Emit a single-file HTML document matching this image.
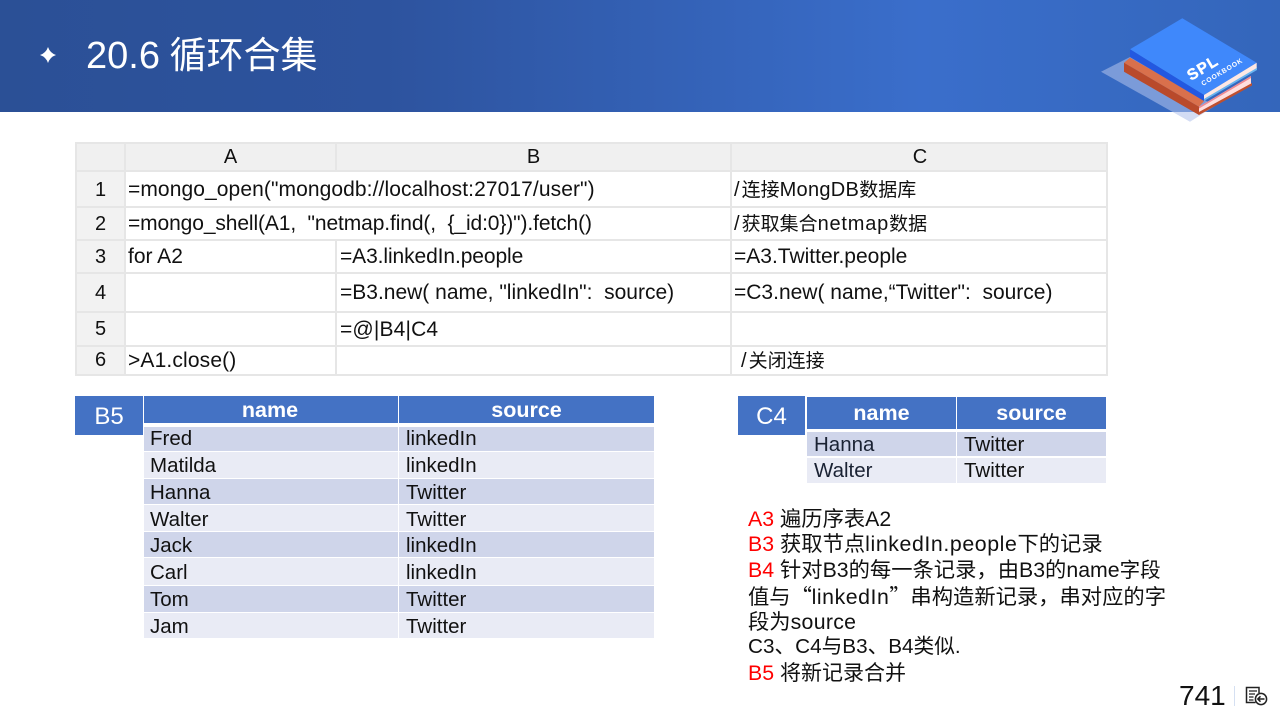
<!DOCTYPE html>
<html lang="zh-CN"><head><meta charset="utf-8">
<style>
html,body{margin:0;padding:0}
body{width:1280px;height:720px;position:relative;overflow:hidden;background:#fff;font-family:"Liberation Sans","Noto Sans CJK SC",sans-serif;color:#111}
.a{position:absolute;white-space:pre;line-height:1}
.t{font-size:21px;height:24px;line-height:24px}
.d{font-size:20.5px;height:24px;line-height:24px}
.n{font-size:20px;height:24px;line-height:24px}
.c{text-align:center}
.r{position:absolute}
.red{color:#f00}
.h{font-weight:bold;color:#fff;font-size:21.5px;text-align:center}
.z{font-size:19px}
.s{font-size:21.3px;height:24px;line-height:24px}
.l{letter-spacing:.55px}
.q{display:inline-block;width:21px;font-family:"Noto Sans CJK SC",sans-serif}
</style></head><body>
<div class="r" style="left:0;top:0;width:1280px;height:112px;background:linear-gradient(90deg,#2b5096 0%,#2d539e 30%,#3a6ecb 72%,#3466bb 100%)"></div>
<svg class="r" style="left:36px;top:43px" width="24" height="24" viewBox="0 0 24 24"><path d="M12 4 Q14 10 20 12 Q14 14 12 20 Q10 14 4 12 Q10 10 12 4Z" fill="#fff"/></svg>
<div class="a" style="left:86px;top:34px;font-size:38px;line-height:44px;color:#fff">20.6 <span style="font-size:37px;margin-left:-1px">循环合集</span></div>

<svg class="r" style="left:0;top:0" width="1280" height="130" viewBox="0 0 1280 130">
<defs><clipPath id="up"><rect x="0" y="0" width="1280" height="112"/></clipPath><clipPath id="dn"><rect x="0" y="112" width="1280" height="20"/></clipPath></defs>
<polygon points="1101,71.7 1130,57 1215,106 1190,121.7" fill="#7b9bd9" clip-path="url(#up)"/>
<polygon points="1101,71.7 1130,57 1215,106 1190,121.7" fill="#d3dcf4" clip-path="url(#dn)"/>
<polygon points="1124,62.7 1130,57.7 1205,100 1199,106.7" fill="#d9704c"/>
<polygon points="1124,62.7 1199,106.7 1199,115 1124,71.7" fill="#b94a2b"/>
<polygon points="1199,106.7 1251,76 1251,84 1199,112" fill="#ffdede"/>
<polygon points="1199,106.7 1251,76 1251,78 1199,108.5" fill="#ee8a92"/>
<polygon points="1199,112 1252,83 1252,85.5 1199,115" fill="#c0502f"/>
<polygon points="1204,99 1257,67.5 1257,70 1204,101" fill="#68b4f0"/>
<polygon points="1130,49.3 1182.3,18.3 1256.7,62.7 1204,95" fill="#3f88fb"/>
<polygon points="1130,49.3 1204,95 1204,101 1130,57" fill="#2358e0"/>
<polygon points="1204,95 1256.7,62.7 1256.7,68 1204,99" fill="#fde8e4"/>
<text transform="translate(1191,81) rotate(-31)" font-family="Liberation Sans" font-weight="bold" font-size="15.5" fill="#fff" stroke="#fff" stroke-width=".4" letter-spacing="1.2">SPL</text>
<text transform="translate(1203,86) rotate(-31)" font-family="Liberation Sans" font-weight="bold" font-size="6.8" fill="#fff" letter-spacing=".8">COOKBOOK</text>
</svg>

<!-- grid -->
<div class="r" style="left:75px;top:142px;width:1033px;height:234px;background:#e6e6e6"></div>
<div class="r" style="left:77px;top:144px;width:47px;height:26px;background:#f0f0f0"></div>
<div class="r" style="left:126px;top:144px;width:209px;height:26px;background:#f0f0f0"></div>
<div class="r" style="left:337px;top:144px;width:393px;height:26px;background:#f0f0f0"></div>
<div class="r" style="left:732px;top:144px;width:374px;height:26px;background:#f0f0f0"></div>
<div class="r" style="left:77px;top:172px;width:47px;height:34px;background:#f2f2f2"></div>
<div class="r" style="left:77px;top:208px;width:47px;height:31px;background:#f2f2f2"></div>
<div class="r" style="left:77px;top:241px;width:47px;height:31px;background:#f2f2f2"></div>
<div class="r" style="left:77px;top:274px;width:47px;height:37px;background:#f2f2f2"></div>
<div class="r" style="left:77px;top:313px;width:47px;height:32px;background:#f2f2f2"></div>
<div class="r" style="left:77px;top:347px;width:47px;height:27px;background:#f2f2f2"></div>
<div class="r" style="left:126px;top:172px;width:604px;height:34px;background:#fff"></div>
<div class="r" style="left:732px;top:172px;width:374px;height:34px;background:#fff"></div>
<div class="r" style="left:126px;top:208px;width:604px;height:31px;background:#fff"></div>
<div class="r" style="left:732px;top:208px;width:374px;height:31px;background:#fff"></div>
<div class="r" style="left:126px;top:241px;width:209px;height:31px;background:#fff"></div>
<div class="r" style="left:337px;top:241px;width:393px;height:31px;background:#fff"></div>
<div class="r" style="left:732px;top:241px;width:374px;height:31px;background:#fff"></div>
<div class="r" style="left:126px;top:274px;width:209px;height:37px;background:#fff"></div>
<div class="r" style="left:337px;top:274px;width:393px;height:37px;background:#fff"></div>
<div class="r" style="left:732px;top:274px;width:374px;height:37px;background:#fff"></div>
<div class="r" style="left:126px;top:313px;width:209px;height:32px;background:#fff"></div>
<div class="r" style="left:337px;top:313px;width:393px;height:32px;background:#fff"></div>
<div class="r" style="left:732px;top:313px;width:374px;height:32px;background:#fff"></div>
<div class="r" style="left:126px;top:347px;width:209px;height:27px;background:#fff"></div>
<div class="r" style="left:337px;top:347px;width:393px;height:27px;background:#fff"></div>
<div class="r" style="left:732px;top:347px;width:374px;height:27px;background:#fff"></div>

<div class="a n c" style="left:126px;top:145px;width:209px">A</div>
<div class="a n c" style="left:337px;top:145px;width:393px">B</div>
<div class="a n c" style="left:733px;top:145px;width:374px">C</div>
<div class="a n c" style="left:77px;top:178px;width:47px">1</div>
<div class="a n c" style="left:77px;top:212px;width:47px">2</div>
<div class="a n c" style="left:77px;top:245px;width:47px">3</div>
<div class="a n c" style="left:77px;top:281px;width:47px">4</div>
<div class="a n c" style="left:77px;top:317px;width:47px">5</div>
<div class="a n c" style="left:77px;top:348px;width:47px">6</div>

<div class="a t" style="left:128px;top:178px;letter-spacing:.09px">=mongo_open("mongodb://localhost:27017/user")</div>
<div class="a t" style="left:128px;top:212px;letter-spacing:-.11px">=mongo_shell(A1,  "netmap.find(,  {_id:0})").fetch()</div>
<div class="a t" style="left:128px;top:245px">for A2</div>
<div class="a t" style="left:128px;top:349px;letter-spacing:.15px">&gt;A1.close()</div>
<div class="a t" style="left:340px;top:245px;letter-spacing:-.1px">=A3.linkedIn.people</div>
<div class="a t" style="left:340px;top:281px">=B3.new( name, "linkedIn":  source)</div>
<div class="a t" style="left:340px;top:318px;letter-spacing:.15px">=@|B4|C4</div>
<div class="a n" style="left:734px;top:178px"><span style="letter-spacing:2px">/</span><span class="z">连接</span><span style="letter-spacing:.3px">MongDB</span><span class="z">数据库</span></div>
<div class="a n" style="left:734px;top:212px"><span style="letter-spacing:2px">/</span><span class="z">获取集合</span><span style="letter-spacing:.8px">netmap</span><span class="z">数据</span></div>
<div class="a t" style="left:734px;top:245px">=A3.Twitter.people</div>
<div class="a t" style="left:734px;top:281px">=C3.new( name,“Twitter":  source)</div>
<div class="a n" style="left:741px;top:349px"><span style="letter-spacing:2px">/</span><span class="z">关闭连接</span></div>

<!-- B5 table -->
<div class="r" style="left:75px;top:396px;width:68px;height:39px;background:#4472c4"></div>
<div class="a" style="left:75px;top:403px;width:68px;height:28px;line-height:28px;text-align:center;color:#fff;font-size:24px">B5</div>
<div class="r" style="left:144px;top:396px;width:254px;height:27px;background:#4472c4"></div>
<div class="r" style="left:399px;top:396px;width:255px;height:27px;background:#4472c4"></div>
<div class="a h" style="left:143px;top:398px;width:254px;height:24px;line-height:24px">name</div>
<div class="a h" style="left:399px;top:398px;width:255px;height:24px;line-height:24px">source</div>
<div class="r" style="left:144px;top:427px;width:254px;height:24px;background:#cfd5ea"></div><div class="r" style="left:399px;top:427px;width:255px;height:24px;background:#cfd5ea"></div>
<div class="r" style="left:144px;top:452px;width:254px;height:26px;background:#e9ebf5"></div><div class="r" style="left:399px;top:452px;width:255px;height:26px;background:#e9ebf5"></div>
<div class="r" style="left:144px;top:479px;width:254px;height:25px;background:#cfd5ea"></div><div class="r" style="left:399px;top:479px;width:255px;height:25px;background:#cfd5ea"></div>
<div class="r" style="left:144px;top:505px;width:254px;height:26px;background:#e9ebf5"></div><div class="r" style="left:399px;top:505px;width:255px;height:26px;background:#e9ebf5"></div>
<div class="r" style="left:144px;top:532px;width:254px;height:25px;background:#cfd5ea"></div><div class="r" style="left:399px;top:532px;width:255px;height:25px;background:#cfd5ea"></div>
<div class="r" style="left:144px;top:558px;width:254px;height:27px;background:#e9ebf5"></div><div class="r" style="left:399px;top:558px;width:255px;height:27px;background:#e9ebf5"></div>
<div class="r" style="left:144px;top:586px;width:254px;height:26px;background:#cfd5ea"></div><div class="r" style="left:399px;top:586px;width:255px;height:26px;background:#cfd5ea"></div>
<div class="r" style="left:144px;top:613px;width:254px;height:25px;background:#e9ebf5"></div><div class="r" style="left:399px;top:613px;width:255px;height:25px;background:#e9ebf5"></div>
<div class="a d" style="left:150px;top:427px">Fred</div><div class="a d" style="left:406px;top:427px">linkedIn</div>
<div class="a d" style="left:150px;top:454px">Matilda</div><div class="a d" style="left:406px;top:454px">linkedIn</div>
<div class="a d" style="left:150px;top:481px">Hanna</div><div class="a d" style="left:406px;top:481px">Twitter</div>
<div class="a d" style="left:150px;top:508px">Walter</div><div class="a d" style="left:406px;top:508px">Twitter</div>
<div class="a d" style="left:150px;top:534px">Jack</div><div class="a d" style="left:406px;top:534px">linkedIn</div>
<div class="a d" style="left:150px;top:561px">Carl</div><div class="a d" style="left:406px;top:561px">linkedIn</div>
<div class="a d" style="left:150px;top:588px">Tom</div><div class="a d" style="left:406px;top:588px">Twitter</div>
<div class="a d" style="left:150px;top:615px">Jam</div><div class="a d" style="left:406px;top:615px">Twitter</div>

<!-- C4 table -->
<div class="r" style="left:738px;top:396px;width:67px;height:39px;background:#4472c4"></div>
<div class="a" style="left:738px;top:403px;width:67px;height:28px;line-height:28px;text-align:center;color:#fff;font-size:24px">C4</div>
<div class="r" style="left:807px;top:397px;width:149px;height:32px;background:#4472c4"></div>
<div class="r" style="left:957px;top:397px;width:149px;height:32px;background:#4472c4"></div>
<div class="a h" style="left:807px;top:401px;width:149px;height:24px;line-height:24px">name</div>
<div class="a h" style="left:957px;top:401px;width:149px;height:24px;line-height:24px">source</div>
<div class="r" style="left:807px;top:432px;width:149px;height:24px;background:#cfd5ea"></div><div class="r" style="left:957px;top:432px;width:149px;height:24px;background:#cfd5ea"></div>
<div class="r" style="left:807px;top:458px;width:149px;height:25px;background:#e9ebf5"></div><div class="r" style="left:957px;top:458px;width:149px;height:25px;background:#e9ebf5"></div>
<div class="a d" style="left:814px;top:433px;color:#1a2233">Hanna</div><div class="a d" style="left:964px;top:433px">Twitter</div>
<div class="a d" style="left:814px;top:459px;color:#1a2233">Walter</div><div class="a d" style="left:964px;top:459px">Twitter</div>

<!-- notes -->
<div class="a s" style="left:748px;top:507px"><span class="red">A3</span> 遍历序表A2</div>
<div class="a s" style="left:748px;top:532px"><span class="red">B3</span> 获取节点<span style="letter-spacing:.6px">linkedIn.people</span>下的记录</div>
<div class="a s" style="left:748px;top:558px"><span class="red">B4</span> 针对B3的每一条记录，由B3的name<span style="font-size:20.5px">字段</span></div>
<div class="a s" style="left:748px;top:584px">值与<span class="q" style="text-align:right">“</span><span class="l">linkedIn</span><span class="q" style="text-align:left">”</span>串构造新记录，串对应的字</div>
<div class="a s" style="left:748px;top:610px">段为<span style="letter-spacing:.3px">source</span></div>
<div class="a s" style="left:748px;top:635px;font-size:20.7px">C3、C4与B3、B4类似.</div>
<div class="a s" style="left:748px;top:661px"><span class="red">B5</span> <span style="font-size:21px">将新记录合并</span></div>

<!-- page number -->
<div class="a" style="left:1179px;top:681px;font-size:28px;line-height:30px;color:#111">741</div>
<div class="r" style="left:1234px;top:686px;width:1px;height:20px;background:#d5e0f2"></div>
<svg class="r" style="left:1245px;top:686px" width="24" height="21" viewBox="0 0 24 21" fill="none" stroke="#222">
<path d="M10.5 16.5H1.5V1.5H14V7" stroke-width="1.5"/>
<path d="M4 5H12M4 8H10M4 11H8.5M4 14H8.5" stroke-width="1.3"/>
<circle cx="16" cy="13" r="5.6" stroke-width="1.5"/>
<path d="M19.5 13H13M15.5 10.3L12.8 13L15.5 15.7" stroke-width="1.5"/>
</svg>
</body></html>
